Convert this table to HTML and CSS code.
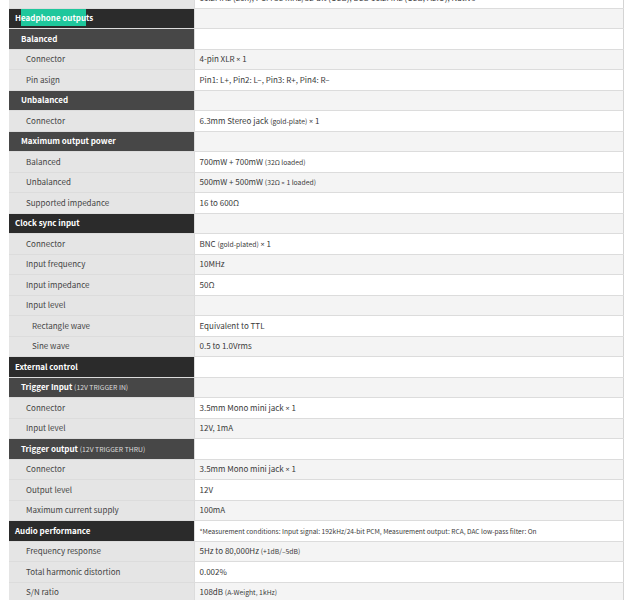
FILE: index.html
```html
<!DOCTYPE html>
<html>
<head>
<meta charset="utf-8">
<link rel="stylesheet" href="styles.css">
</head>
<body>
<table class="spec">
<colgroup><col class="c1"><col class="c2"></colgroup>
<tr class="r-w"><td class="l3"></td><td class="v">11.2MHz (2ch), PCM 384kHz/32-bit (USB), DSD 11.2MHz (USB, ASIO), Native</td></tr>
<tr class="r-g"><td class="h1">H<span class="sel">eadphone outpu</span>ts</td><td class="v"></td></tr>
<tr class="r-w"><td class="h2">Balanced</td><td class="v"></td></tr>
<tr class="r-g"><td class="l3">Connector</td><td class="v">4-pin XLR <span class="x">×</span> 1</td></tr>
<tr class="r-w"><td class="l3">Pin asign</td><td class="v">Pin1: L+, Pin2: L–, Pin3: R+, Pin4: R–</td></tr>
<tr class="r-g"><td class="h2">Unbalanced</td><td class="v"></td></tr>
<tr class="r-w"><td class="l3">Connector</td><td class="v">6.3mm Stereo jack <small>(gold-plate)</small> <span class="x">×</span> 1</td></tr>
<tr class="r-g"><td class="h2">Maximum output power</td><td class="v"></td></tr>
<tr class="r-w"><td class="l3">Balanced</td><td class="v">700mW + 700mW <small>(32Ω loaded)</small></td></tr>
<tr class="r-g"><td class="l3">Unbalanced</td><td class="v">500mW + 500mW <small>(32Ω <span class="x">×</span> 1 loaded)</small></td></tr>
<tr class="r-w"><td class="l3">Supported impedance</td><td class="v">16 to 600Ω</td></tr>
<tr class="r-g"><td class="h1">Clock sync input</td><td class="v"></td></tr>
<tr class="r-w"><td class="l3">Connector</td><td class="v">BNC <small>(gold-plated)</small> <span class="x">×</span> 1</td></tr>
<tr class="r-g"><td class="l3">Input frequency</td><td class="v">10MHz</td></tr>
<tr class="r-w"><td class="l3">Input impedance</td><td class="v">50Ω</td></tr>
<tr class="r-g"><td class="l3">Input level</td><td class="v"></td></tr>
<tr class="r-w"><td class="l4">Rectangle wave</td><td class="v">Equivalent to TTL</td></tr>
<tr class="r-g"><td class="l4">Sine wave</td><td class="v">0.5 to 1.0Vrms</td></tr>
<tr class="r-w"><td class="h1">External control</td><td class="v"></td></tr>
<tr class="r-g"><td class="h2">Trigger Input <small>(12V TRIGGER IN)</small></td><td class="v"></td></tr>
<tr class="r-w"><td class="l3">Connector</td><td class="v">3.5mm Mono mini jack <span class="x">×</span> 1</td></tr>
<tr class="r-g"><td class="l3">Input level</td><td class="v">12V, 1mA</td></tr>
<tr class="r-w"><td class="h2">Trigger output <small>(12V TRIGGER THRU)</small></td><td class="v"></td></tr>
<tr class="r-g"><td class="l3">Connector</td><td class="v">3.5mm Mono mini jack <span class="x">×</span> 1</td></tr>
<tr class="r-w"><td class="l3">Output level</td><td class="v">12V</td></tr>
<tr class="r-g"><td class="l3">Maximum current supply</td><td class="v">100mA</td></tr>
<tr class="r-w"><td class="h1">Audio performance</td><td class="v note">*Measurement conditions: Input signal: 192kHz/24-bit PCM, Measurement output: RCA, DAC low-pass filter: On</td></tr>
<tr class="r-g"><td class="l3">Frequency response</td><td class="v">5Hz to 80,000Hz <small>(+1dB/–5dB)</small></td></tr>
<tr class="r-w"><td class="l3">Total harmonic distortion</td><td class="v">0.002%</td></tr>
<tr class="r-g"><td class="l3">S/N ratio</td><td class="v">108dB <small>(A-Weight, 1kHz)</small></td></tr>
</table>
</body>
</html>
```

FILE: styles.css
```css
html, body {
  margin: 0;
  padding: 0;
  background: #ffffff;
}
body {
  font-family: "Noto Sans CJK JP", "Source Sans Pro", "Noto Sans", sans-serif;
  color: #3a3a3a;
  overflow: hidden;
}
.spec {
  margin: -13px 0 0 9px;
  width: 614px;
  border-collapse: collapse;
  table-layout: fixed;
  font-size: 8px;
}
.c1 { width: 185px; }
.c2 { width: 429px; }
.spec td {
  box-sizing: border-box;
  height: 20.5px;
  padding: 0 6px;
  border-top: 1px solid #dcdcdc;
  border-bottom: 1px solid #dcdcdc;
  vertical-align: middle;
  white-space: nowrap;
  overflow: hidden;
  line-height: 12px;
}
.spec td:first-child {
  border-right: 1px solid #dcdcdc;
}
.spec td.v {
  padding-left: 5px;
  border-right: 1px solid #d4d4d4;
}
.r-g td.v { background: #f4f4f4; }
.r-w td.v { background: #ffffff; }
.h1 {
  background: #2b2b2b;
  color: #ffffff;
  font-weight: bold;
}
.h2 {
  background: #474747;
  color: #ffffff;
  font-weight: bold;
  padding-left: 12px !important;
}
.l3 {
  background: #e5e5e5;
  padding-left: 17px !important;
  color: #444444;
}
.l4 {
  background: #e5e5e5;
  padding-left: 23px !important;
  color: #444444;
}
small {
  font-size: 6.8px;
  font-weight: normal;
}
.h2 small { color: #dddddd; }
.note { font-size: 6.6px; }
.x {
  font-family: "Noto Sans", "DejaVu Sans", sans-serif;
  font-size: 0.9em;
}
.sel {
  background: #1fc79c;
  color: #ffffff;
  padding: 3px 0;
}
```
